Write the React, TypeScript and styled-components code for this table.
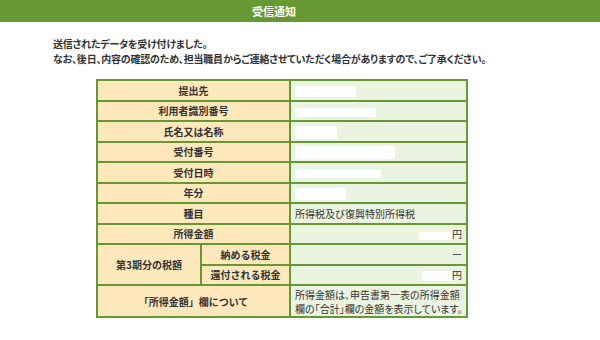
import styled, { createGlobalStyle } from "styled-components";

const GlobalStyle = createGlobalStyle`
	body {
		margin: 0;
		background: #ffffff;
		font-family: "Noto Sans CJK JP", "Noto Sans", sans-serif;
		color: #333333;
	}
`;

const Header = styled.div`
	height: 22px;
	line-height: 22px;
	background-color: #669933;
	color: #ffffff;
	font-size: 11px;
	font-weight: 700;
	text-align: center;
	padding-right: 52px;
`;

const Intro = styled.div`
	padding: 15px 0 0 53px;
	font-size: 10px;
	font-weight: 700;
	line-height: 14.5px;
	letter-spacing: -0.2px;
	font-feature-settings: "palt";
`;

const Table = styled.table`
	margin: 13px 0 0 96px;
	width: 372px;
	table-layout: fixed;
	border-collapse: collapse;
	font-size: 10px;
	line-height: 13px;
`;

const Label = styled.th`
	height: 18.5px;
	padding: 0 2px;
	background-color: #ffe8bc;
	border: 2px solid #669933;
	font-weight: 700;
	text-align: center;
	vertical-align: middle;
	white-space: nowrap;
`;

const Value = styled.td<{ $right?: boolean }>`
	height: 18.5px;
	padding: 0 4px;
	background-color: #ebf4e0;
	border: 2px solid #669933;
	text-align: ${(p) => (p.$right ? "right" : "left")};
	vertical-align: middle;
	white-space: nowrap;
`;

const Note = styled(Value)`
	height: 29px;
	padding: 1px 4px 0;
	line-height: 14px;
	font-feature-settings: "palt";
`;

const Mask = styled.span<{ $w: number; $h: number }>`
	display: inline-block;
	width: ${(p) => p.$w}px;
	height: ${(p) => p.$h}px;
	background-color: #ffffff;
	vertical-align: middle;
`;

const masked = [
	{ label: "提出先", w: 61, h: 11 },
	{ label: "利用者識別番号", w: 81, h: 9 },
	{ label: "氏名又は名称", w: 42, h: 13 },
	{ label: "受付番号", w: 100, h: 13 },
	{ label: "受付日時", w: 86, h: 8 },
	{ label: "年分", w: 51, h: 12 },
];

export default function App() {
	return (
		<>
			<GlobalStyle />
			<Header>受信通知</Header>
			<Intro>
				送信されたデータを受け付けました。
				<br />
				なお、後日、内容の確認のため、担当職員からご連絡させていただく場合がありますので、ご了承ください。
			</Intro>
			<Table>
				<colgroup>
					<col style={{ width: 104 }} />
					<col style={{ width: 89 }} />
					<col />
				</colgroup>
				<tbody>
					{masked.map((row) => (
						<tr key={row.label}>
							<Label colSpan={2}>{row.label}</Label>
							<Value>
								<Mask $w={row.w} $h={row.h} />
							</Value>
						</tr>
					))}
					<tr>
						<Label colSpan={2}>種目</Label>
						<Value>所得税及び復興特別所得税</Value>
					</tr>
					<tr>
						<Label colSpan={2}>所得金額</Label>
						<Value $right>
							<Mask $w={33} $h={8} />円
						</Value>
					</tr>
					<tr>
						<Label rowSpan={2}>第3期分の税額</Label>
						<Label>納める税金</Label>
						<Value $right>ー</Value>
					</tr>
					<tr>
						<Label>還付される税金</Label>
						<Value $right>
							<Mask $w={30} $h={10} />円
						</Value>
					</tr>
					<tr>
						<Label colSpan={2}>「所得金額」欄について</Label>
						<Note>
							所得金額は、申告書第一表の所得金額
							<br />
							欄の「合計」欄の金額を表示しています。
						</Note>
					</tr>
				</tbody>
			</Table>
		</>
	);
}
